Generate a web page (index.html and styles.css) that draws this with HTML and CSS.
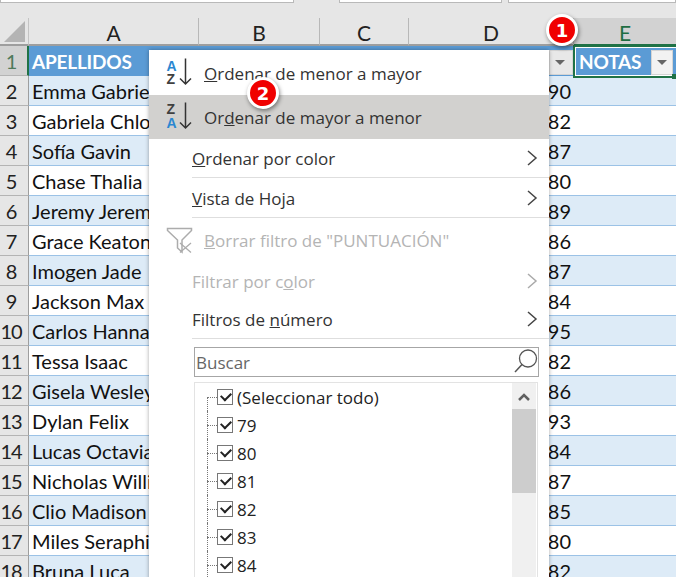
FILE: index.html
```html
<!DOCTYPE html>
<html lang="es">
<head>
  <meta charset="UTF-8">
  <title>Ordenar tabla</title>
  <link rel="stylesheet" href="styles.css">
</head>
<body>
<div class="sheet">
  <div class="topbar"><div class="box box1"></div><div class="box box2"></div><div class="box box3"></div></div>

  <div class="grid">
    <div class="corner"><svg width="28" height="28" viewBox="0 0 28 28"><path d="M25 4V25H4Z" fill="#b4b4b4"/></svg></div>
    <div class="colhead">A</div><div class="colhead">B</div><div class="colhead">C</div><div class="colhead">D</div><div class="colhead active">E</div>

    <div class="rownum active">1</div>
    <div class="cell title">APELLIDOS</div><div class="cell title"></div><div class="cell title"></div>
    <div class="cell title"><span class="filter"><i></i></span></div>
    <div class="cell title selected">NOTAS<span class="filter"><i></i></span><span class="handle"></span></div>

    <div class="rownum">2</div><div class="cell blue">Emma Gabriel</div><div class="cell blue"></div><div class="cell blue"></div><div class="cell blue num">90</div><div class="cell blue"></div>
    <div class="rownum">3</div><div class="cell">Gabriela Chloe</div><div class="cell"></div><div class="cell"></div><div class="cell num">82</div><div class="cell"></div>
    <div class="rownum">4</div><div class="cell blue">Sofía Gavin</div><div class="cell blue"></div><div class="cell blue"></div><div class="cell blue num">87</div><div class="cell blue"></div>
    <div class="rownum">5</div><div class="cell">Chase Thalia</div><div class="cell"></div><div class="cell"></div><div class="cell num">80</div><div class="cell"></div>
    <div class="rownum">6</div><div class="cell blue">Jeremy Jeremiah</div><div class="cell blue"></div><div class="cell blue"></div><div class="cell blue num">89</div><div class="cell blue"></div>
    <div class="rownum">7</div><div class="cell">Grace Keaton</div><div class="cell"></div><div class="cell"></div><div class="cell num">86</div><div class="cell"></div>
    <div class="rownum">8</div><div class="cell blue">Imogen Jade</div><div class="cell blue"></div><div class="cell blue"></div><div class="cell blue num">87</div><div class="cell blue"></div>
    <div class="rownum">9</div><div class="cell">Jackson Max</div><div class="cell"></div><div class="cell"></div><div class="cell num">84</div><div class="cell"></div>
    <div class="rownum">10</div><div class="cell blue">Carlos Hannah</div><div class="cell blue"></div><div class="cell blue"></div><div class="cell blue num">95</div><div class="cell blue"></div>
    <div class="rownum">11</div><div class="cell">Tessa Isaac</div><div class="cell"></div><div class="cell"></div><div class="cell num">82</div><div class="cell"></div>
    <div class="rownum">12</div><div class="cell blue">Gisela Wesley</div><div class="cell blue"></div><div class="cell blue"></div><div class="cell blue num">86</div><div class="cell blue"></div>
    <div class="rownum">13</div><div class="cell">Dylan Felix</div><div class="cell"></div><div class="cell"></div><div class="cell num">93</div><div class="cell"></div>
    <div class="rownum">14</div><div class="cell blue">Lucas Octavia</div><div class="cell blue"></div><div class="cell blue"></div><div class="cell blue num">84</div><div class="cell blue"></div>
    <div class="rownum">15</div><div class="cell">Nicholas William</div><div class="cell"></div><div class="cell"></div><div class="cell num">87</div><div class="cell"></div>
    <div class="rownum">16</div><div class="cell blue">Clio Madison</div><div class="cell blue"></div><div class="cell blue"></div><div class="cell blue num">85</div><div class="cell blue"></div>
    <div class="rownum">17</div><div class="cell">Miles Seraphina</div><div class="cell"></div><div class="cell"></div><div class="cell num">80</div><div class="cell"></div>
    <div class="rownum">18</div><div class="cell blue">Bruna Luca</div><div class="cell blue"></div><div class="cell blue"></div><div class="cell blue num">82</div><div class="cell blue"></div>
  </div>

  <!-- menu del filtro -->
  <div class="menu">
    <div class="item sort">
      <svg class="sorticon" width="30" height="30" viewBox="0 0 30 30"><text x="1.500" y="12.500" class="az blue-l">A</text><text x="1.500" y="26" class="az dark-l">Z</text><path d="M20.500 0.500V26M15 20.500L20.500 26L26 20.500" class="arrow"/></svg>
      <span><u>O</u>rdenar de menor a mayor</span>
    </div>
    <div class="item sort hover">
      <svg class="sorticon" width="30" height="30" viewBox="0 0 30 30"><text x="1.500" y="11.500" class="az dark-l">Z</text><text x="1.500" y="25.500" class="az blue-l">A</text><path d="M20.500 0.500V26M15 20.500L20.500 26L26 20.500" class="arrow"/></svg>
      <span>Or<u>d</u>enar de mayor a menor</span>
    </div>
    <div class="item plain h38"><span><u>O</u>rdenar por color</span><svg class="chev" width="12" height="18" viewBox="0 0 12 18"><path d="M2 2L10 9L2 16"/></svg></div>
    <div class="sep"></div>
    <div class="item plain h39"><span><u>V</u>ista de Hoja</span><svg class="chev" width="12" height="18" viewBox="0 0 12 18"><path d="M2 2L10 9L2 16"/></svg></div>
    <div class="sep"></div>
    <div class="item off clear">
      <svg class="funnel" width="28" height="28" viewBox="0 0 28 28"><path d="M1.500 2.500H25.500V4.500L16 14V26L11.500 22V14L1.500 4.500Z" fill="#fff" stroke="#acacac" stroke-width="1.500"/><path d="M14 17L25 26.500M25 17L14 26.500" stroke="#acacac" stroke-width="1.300"/></svg>
      <span><u>B</u>orrar filtro de "PUNTUACIÓN"</span>
    </div>
    <div class="item plain off h38"><span>Filtrar por c<u>o</u>lor</span><svg class="chev" width="12" height="18" viewBox="0 0 12 18"><path d="M2 2L10 9L2 16"/></svg></div>
    <div class="item plain h38"><span>Filtros de <u>n</u>úmero</span><svg class="chev" width="12" height="18" viewBox="0 0 12 18"><path d="M2 2L10 9L2 16"/></svg></div>
    <div class="sep"></div>
    <div class="search">
      <span>Buscar</span>
      <svg width="26" height="26" viewBox="0 0 26 26"><circle cx="16" cy="9.500" r="8.500" fill="none" stroke="#555" stroke-width="1.300"/><path d="M10 15.500L3 23" stroke="#555" stroke-width="1.500"/></svg>
    </div>
    <div class="list">
      <div class="tree">
        <div class="check"><b></b>(Seleccionar todo)</div>
        <div class="check"><b></b>79</div>
        <div class="check"><b></b>80</div>
        <div class="check"><b></b>81</div>
        <div class="check"><b></b>82</div>
        <div class="check"><b></b>83</div>
        <div class="check"><b></b>84</div>
      </div>
      <div class="scroll">
        <svg width="24" height="26" viewBox="0 0 24 26"><path d="M7 17L12 12L17 17" fill="none" stroke="#606060" stroke-width="2.500"/></svg>
        <div class="thumb"></div>
      </div>
    </div>
  </div>

  <div class="badge one">1</div>
  <div class="badge two">2</div>
</div>
</body>
</html>
```

FILE: styles.css
```css
* {
  box-sizing: border-box;
  margin: 0;
  padding: 0;
}

html, body {
  width: 676px;
  height: 577px;
  overflow: hidden;
}

.sheet {
  position: relative;
  width: 676px;
  height: 577px;
  overflow: hidden;
  background: #e6e6e6;
  font-family: Lato, "Liberation Sans", sans-serif;
}

.topbar {
  display: flex;
  height: 18px;
  gap: 6px;
}

.box {
  height: 3px;
  background: #fff;
  border: 1px solid #b9b9b9;
  border-top: 0;
}

.box1 { width: 294px; }
.box2 { width: 163px; margin-left: 39px; }
.box3 { flex: 1; }

.grid {
  display: grid;
  grid-template-columns: 29px 170px 121px 89px 165px 102px;
  grid-auto-rows: 30px;
  grid-template-rows: 28px;
}

.corner {
  border-right: 1px solid #c4c4c4;
  border-bottom: 2px solid #9e9e9e;
}

.corner svg {
  display: block;
  margin-top: -1px;
}

.colhead {
  display: flex;
  align-items: center;
  justify-content: center;
  padding-top: 3px;
  border-right: 1px solid #b8b8b8;
  border-bottom: 2px solid #9e9e9e;
  font-size: 21px;
  color: #222;
}

.colhead.active {
  background: #d2d2d2;
  color: #1f6e43;
  border-right: 0;
  border-bottom-color: #1f7246;
}

.rownum {
  display: flex;
  align-items: center;
  justify-content: center;
  padding-right: 6px;
  background: #e6e6e6;
  border-right: 1px solid #9e9e9e;
  border-bottom: 1px solid #b4b4b4;
  font-size: 20px;
  letter-spacing: -1px;
  color: #222;
}

.rownum.active {
  background: #d2d2d2;
  color: #4f7a5c;
  border-right: 2px solid #1f7246;
  padding-right: 5px;
}

.cell {
  display: flex;
  align-items: center;
  padding: 0 3px;
  background: #fff;
  border-bottom: 1px solid #9bc2e6;
  font-size: 20px;
  color: #111;
  white-space: nowrap;
  overflow: hidden;
}

.cell.blue {
  background: #ddebf7;
}

.cell.num {
  justify-content: flex-end;
}

.cell.title {
  position: relative;
  padding-top: 1px;
  background: #5b9bd5;
  border-bottom: 0;
  color: #fff;
  font-size: 19px;
  font-weight: 700;
  letter-spacing: -0.2px;
}

.cell.selected {
  margin: -1px 0 -2px -1px;
  padding-top: 0;
  padding-bottom: 1px;
  border: 2px solid #1f7246;
  border-right: 0;
  box-shadow: inset 1px 1px 0 #fff, inset 0 -1px 0 #fff;
  padding-left: 4px;
  overflow: visible;
}

.filter {
  position: absolute;
  right: 1px;
  top: 4px;
  width: 24px;
  height: 25px;
  background: #e8e8e8;
  border: 1px solid #d4d4d4;
}

.selected .filter {
  right: 3px;
  top: 3px;
  width: 22px;
  background: #f2f2f2;
}

.filter i {
  position: absolute;
  left: 5px;
  top: 9px;
  border-left: 5px solid transparent;
  border-right: 5px solid transparent;
  border-top: 5px solid #666;
}

.handle {
  position: absolute;
  right: 0;
  bottom: -3px;
  width: 4px;
  height: 5px;
  background: #1f7246;
}

.menu {
  position: absolute;
  left: 149px;
  top: 50px;
  width: 400px;
  height: 560px;
  padding-top: 1px;
  background: #fff;
  box-shadow: 0 0 4px rgba(0, 0, 0, 0.35);
  font-family: "Open Sans", "Noto Sans", sans-serif;
  font-size: 17px;
  color: #333;
}

.item {
  display: flex;
  align-items: center;
}

.item span {
  white-space: nowrap;
}

.item.sort {
  height: 44px;
  padding-left: 55px;
  position: relative;
}

.item.hover {
  background: #d2d1cf;
}

.sorticon {
  position: absolute;
  left: 16px;
  top: 7px;
}

.az {
  font-family: "Liberation Sans", sans-serif;
  font-size: 14px;
  font-weight: 700;
}

.blue-l { fill: #2b87d1; }
.dark-l { fill: #404040; }

.arrow {
  fill: none;
  stroke: #333;
  stroke-width: 1.500;
}

.plain {
  justify-content: space-between;
  padding: 0 11px 0 43px;
}

.h38 { height: 38px; }
.h39 { height: 39px; padding-top: 1px; }

.off {
  color: #b4b4b4;
}

.off .chev path {
  stroke: #aaa;
}

.clear {
  height: 44px;
  padding-left: 55px;
  position: relative;
}

.funnel {
  position: absolute;
  left: 17px;
  top: 8px;
}

.chev path {
  fill: none;
  stroke: #444;
  stroke-width: 1.500;
}

.sep {
  height: 1px;
  margin-left: 43px;
  background: #dedede;
}

.search {
  display: flex;
  align-items: center;
  justify-content: space-between;
  height: 30px;
  margin: 8px 10px 0 45px;
  padding: 0 0 0 1px;
  border: 1px solid #a6a6a6;
  color: #666;
}

.list {
  display: flex;
  justify-content: space-between;
  height: 300px;
  margin: 5px 11px 0 45px;
  padding: 0 1px 0 0;
  border: 1px solid #e3e3e3;
  border-bottom: 0;
}

.tree {
  flex: 1;
  padding: 0 0 0 22px;
  font-size: 17px;
  color: #222;
}

.check {
  position: relative;
  display: flex;
  align-items: center;
  height: 28px;
}

.check b {
  position: relative;
  width: 16px;
  height: 16px;
  margin-right: 4px;
  border: 1px solid #777;
  background: #fff;
}

.check b::after {
  content: "";
  position: absolute;
  left: 3px;
  top: 2px;
  width: 8px;
  height: 5px;
  border-left: 2px solid #222;
  border-bottom: 2px solid #222;
  transform: rotate(-45deg);
}

/* lineas punteadas del arbol */
.check::before {
  content: "";
  position: absolute;
  left: -10px;
  top: 0;
  height: 100%;
  border-left: 1px dotted #777;
}

.check:first-child::before {
  top: 50%;
  height: 50%;
}

.check::after {
  content: "";
  position: absolute;
  left: -10px;
  top: 14px;
  width: 10px;
  border-top: 1px dotted #777;
}

.scroll {
  width: 24px;
  background: #f0f0f0;
}

.scroll svg {
  display: block;
}

.thumb {
  height: 84px;
  background: #cdcdcd;
}

.badge {
  position: absolute;
  display: flex;
  align-items: center;
  justify-content: center;
  width: 32px;
  height: 32px;
  border-radius: 50%;
  background: #f00000;
  border: 3px solid #fff;
  box-shadow: 1px 2px 4px rgba(0, 0, 0, 0.45);
  font-family: "DejaVu Sans", sans-serif;
  font-size: 18px;
  font-weight: 700;
  color: #fff;
}

.badge.one { left: 546px; top: 14px; }
.badge.two { left: 247px; top: 77px; }
```
